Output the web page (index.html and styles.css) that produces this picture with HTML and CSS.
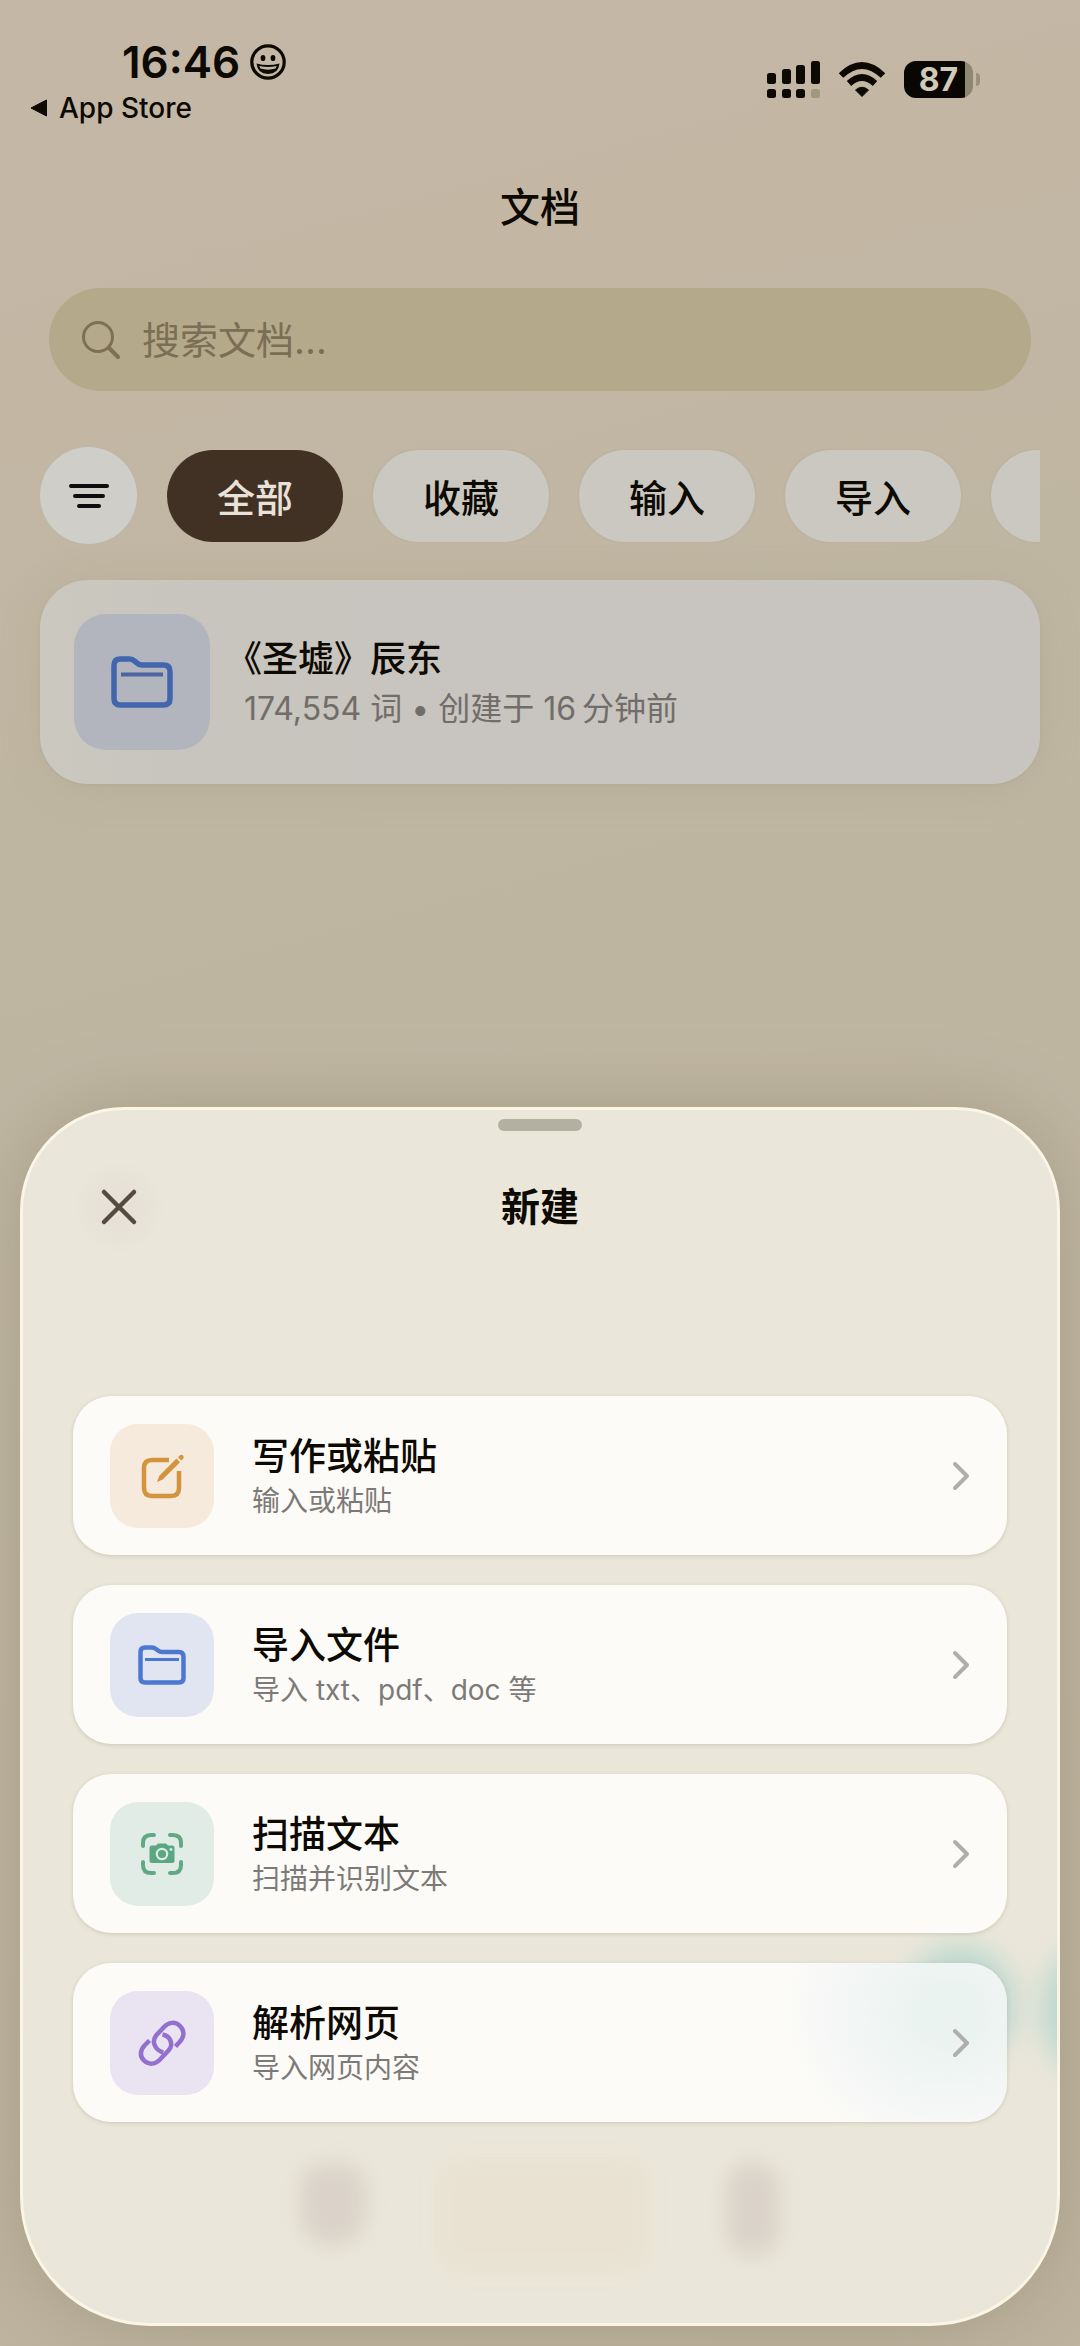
FILE: index.html
```html
<!DOCTYPE html>
<html lang="zh-CN">
<head>
<meta charset="utf-8">
<meta name="viewport" content="width=device-width, initial-scale=1">
<title>文档</title>
<link rel="stylesheet" href="styles.css">
</head>
<body>
<div class="screen">
  <header class="status">
    <div class="status-left">
      <div class="clock">
        <span>16:46</span>
        <svg width="36" height="36" viewBox="0 0 36 36" aria-hidden="true">
          <circle cx="18" cy="18" r="16.2" fill="none" stroke="#0d0903" stroke-width="3.200"/>
          <ellipse cx="13" cy="14" rx="2.4" ry="3.1" fill="#0d0903"/>
          <ellipse cx="23" cy="14" rx="2.4" ry="3.1" fill="#0d0903"/>
          <path d="M6.500 19.500Q18 22.500 29.500 19.500Q28.500 30 18 30Q7.500 30 6.500 19.500Z" fill="#0d0903"/>
          <path d="M9.300 21.900Q18 24 26.700 21.900L25.600 24.600Q18 26.800 10.400 24.600Z" fill="#c4b7a6"/>
        </svg>
      </div>
      <a class="back" href="#">
        <svg width="18" height="18" viewBox="0 0 18 18" aria-hidden="true"><path d="M1 9L16.500 1V17Z" fill="#0d0903" stroke="#0d0903" stroke-width="1" stroke-linejoin="round"/></svg>
        <span>App Store</span>
      </a>
    </div>
    <div class="status-right">
      <svg width="54" height="37" viewBox="0 0 54 37" fill="#0d0903" aria-label="信号">
        <rect x="0" y="12" width="9" height="11" rx="2.500"/>
        <rect x="15" y="8" width="9" height="15" rx="2.500"/>
        <rect x="29" y="4" width="9" height="19" rx="2.500"/>
        <rect x="44" y="0" width="9" height="23" rx="2.500"/>
        <rect x="0" y="28" width="9" height="9" rx="2.500"/>
        <rect x="15" y="28" width="9" height="9" rx="2.500"/>
        <rect x="29" y="28" width="9" height="9" rx="2.500"/>
        <rect x="44" y="28" width="9" height="9" rx="2.500" fill="#a2977f"/>
      </svg>
      <svg class="wifi" width="48" height="36" viewBox="0 0 48 36" fill="none" stroke="#0d0903" aria-label="无线网络">
        <path d="M3 13.500Q24 -6.500 45 13.500" stroke-width="6.500"/>
        <path d="M11 21.500Q24 9.500 37 21.500" stroke-width="6.500"/>
        <path d="M24 34.500L17.500 28Q24 22.500 30.500 28Z" fill="#0d0903" stroke-width="1"/>
      </svg>
      <div class="battery"><span>87</span></div>
      <i class="nub"></i>
    </div>
  </header>

  <main class="library">
    <h1 class="page-title">文档</h1>

    <label class="search">
      <svg width="40" height="40" viewBox="0 0 40 40" fill="none" stroke="#7d7055" stroke-linecap="round" aria-hidden="true">
        <circle cx="17" cy="17" r="14.500" stroke-width="3"/>
        <path d="M28 28L37 37" stroke-width="4"/>
      </svg>
      <input type="search" placeholder="搜索文档..." aria-label="搜索文档">
    </label>

    <nav class="filters">
      <button class="sort" aria-label="排序">
        <svg width="40" height="26" viewBox="0 0 40 26" fill="none" stroke="#0d0d0d" stroke-width="4" stroke-linecap="round"><path d="M2 3H38M6 13H34M10 23H30"/></svg>
      </button>
      <button class="chip chip-on">全部</button>
      <button class="chip">收藏</button>
      <button class="chip">输入</button>
      <button class="chip">导入</button>
      <button class="chip" aria-label="更多"></button>
    </nav>

    <article class="doc">
      <div class="doc-tile">
        <svg width="62" height="52" viewBox="0 0 62 52" fill="none" stroke="#4266ad" aria-hidden="true">
          <path d="M3 9.500Q3 3 9.500 3H18.500Q21.500 3 23.500 5L26 7Q28 9 31 9H52.500Q59 9 59 15.500V42.500Q59 49 52.500 49H9.500Q3 49 3 42.500Z" stroke-width="5.500"/>
          <path d="M10 18.500H52" stroke="#4d65a0" stroke-width="4"/>
        </svg>
      </div>
      <div class="doc-text">
        <h2>《圣墟》辰东</h2>
        <p>174,554 词 • 创建于 16&#8201;分钟前</p>
      </div>
    </article>
  </main>
</div>

<section class="sheet" role="dialog" aria-labelledby="sheet-title">
  <div class="glow"><i class="teal teal-a"></i><i class="teal teal-b"></i><i class="ghost ghost-a"></i><i class="ghost ghost-b"></i><i class="ghost ghost-c"></i></div>
  <i class="handle"></i>
  <header class="sheet-head">
    <button class="close" aria-label="关闭">
      <svg width="38" height="38" viewBox="0 0 38 38" fill="none" stroke="#554b41" stroke-width="4.500" stroke-linecap="round"><path d="M4 4L34 34M34 4L4 34"/></svg>
    </button>
    <h2 id="sheet-title">新建</h2>
  </header>

  <div class="options">
    <button class="option">
      <span class="tile orange">
        <svg width="48" height="48" viewBox="0 0 48 48" fill="none" stroke="#d4933f" stroke-width="4.500" aria-hidden="true">
          <path d="M31 8H14Q6 8 6 16V36Q6 44 14 44H33Q41 44 41 36V19"/>
          <path d="M19 30L21.300 23.800L38.500 6.600L42 10.200L24.700 27.400Z" fill="#d4933f" stroke="none"/>
          <path d="M40 5.200L42 3.200Q43.500 2.200 45 3.500Q46.300 5 45.200 6.600L43.300 8.600Z" fill="#d4933f" stroke="none"/>
        </svg>
      </span>
      <span class="option-text"><strong>写作或粘贴</strong><small>输入或粘贴</small></span>
      <svg class="chevron" width="18" height="30" viewBox="0 0 18 30" aria-hidden="true"><path d="M3 3L15 15L3 27"/></svg>
    </button>
    <button class="option">
      <span class="tile blue">
        <svg width="48" height="40" viewBox="0 0 48 40" fill="none" stroke="#4c78cf" aria-hidden="true">
          <path d="M2.500 7Q2.500 2.500 7 2.500H14Q16 2.500 18 4L20 5.500Q22 7 24 7H41Q45.500 7 45.500 12V33Q45.500 37.500 41 37.500H7Q2.500 37.500 2.500 33Z" stroke-width="4.500"/>
          <path d="M7 14.500H41" stroke-width="3"/>
        </svg>
      </span>
      <span class="option-text"><strong>导入文件</strong><small>导入 txt、pdf、doc 等</small></span>
      <svg class="chevron" width="18" height="30" viewBox="0 0 18 30" aria-hidden="true"><path d="M3 3L15 15L3 27"/></svg>
    </button>
    <button class="option">
      <span class="tile green">
        <svg width="42" height="42" viewBox="0 0 42 42" fill="none" stroke="#61a985" aria-hidden="true">
          <path d="M2 13V10Q2 2 10 2H13M29 2H32Q40 2 40 10V13M40 29V32Q40 40 32 40H29M13 40H10Q2 40 2 32V29" stroke-width="4" stroke-linecap="round"/>
          <path d="M11 12.500H15L17 10.500H25L27 12.500H31Q33.500 12.500 33.500 15V27.500Q33.500 30 31 30H11Q8.500 30 8.500 27.500V15Q8.500 12.500 11 12.500Z" fill="#5ba781" stroke="none"/>
          <circle cx="21" cy="21" r="5.200" stroke="#dcebe4" stroke-width="2.200"/>
          <circle cx="30" cy="16.500" r="1.400" fill="#dcebe4" stroke="none"/>
        </svg>
      </span>
      <span class="option-text"><strong>扫描文本</strong><small>扫描并识别文本</small></span>
      <svg class="chevron" width="18" height="30" viewBox="0 0 18 30" aria-hidden="true"><path d="M3 3L15 15L3 27"/></svg>
    </button>
    <button class="option">
      <span class="tile purple">
        <svg width="48" height="48" viewBox="0 0 48 48" fill="none" stroke="#936fce" stroke-width="4.500" aria-hidden="true">
          <path d="M25.300 33.500C17 31 13 22.500 18.500 16L26.500 7.500C31 3 37.500 2.500 42 7C46.500 11.500 46.500 17.500 42 22.500L37.500 27.500"/>
          <path d="M11.500 21.500L7 26C2 31 1.500 37.500 6 41.500C10.500 46 17 45.500 21.500 41L30.500 31.500C36 25.500 32.500 17 24.500 15.500"/>
        </svg>
      </span>
      <span class="option-text"><strong>解析网页</strong><small>导入网页内容</small></span>
      <svg class="chevron" width="18" height="30" viewBox="0 0 18 30" aria-hidden="true"><path d="M3 3L15 15L3 27"/></svg>
    </button>
  </div>
</section>
</body>
</html>
```
FILE: styles.css
```css
* {
  box-sizing: border-box;
}

body {
  position: relative;
  margin: 0;
  min-height: 100vh;
  overflow-x: hidden;
  background: linear-gradient(165deg, #c4b7a6 0%, #c3b7a4 15%, #bfb6a2 32%, #bdb39e 100%);
  color: #0d0903;
  font-family: Inter, "Noto Sans CJK SC", sans-serif;
}

h1,
h2,
p {
  margin: 0;
}

button {
  margin: 0;
  padding: 0;
  border: 0;
  color: inherit;
  font: inherit;
}

svg {
  display: block;
  flex: none;
}

/* Status bar */
.status {
  display: flex;
  justify-content: space-between;
  padding: 36px 100px 0 30px;
  height: 168px;
}

.clock {
  display: flex;
  align-items: center;
  gap: 10px;
  padding-left: 92px;
  font-size: 44px;
  font-weight: 600;
  line-height: 52px;
}

.back {
  display: flex;
  align-items: center;
  gap: 11px;
  color: inherit;
  font-size: 28px;
  font-weight: 500;
  line-height: 40px;
  text-decoration: none;
}

.status-right {
  display: flex;
  align-items: center;
  align-self: flex-start;
  padding-top: 25px;
}

.wifi {
  margin: 0 18px 0 17px;
}

.battery {
  width: 69px;
  height: 37px;
  border-radius: 12px;
  background: linear-gradient(90deg, #0a0602 61px, #8e8873 61px);
  color: #d2cab9;
  font-size: 32px;
  font-weight: 700;
  line-height: 37px;
  text-align: center;
}

.nub {
  width: 4px;
  height: 13px;
  margin-left: 3px;
  border-radius: 0 6px 6px 0;
  background: #9c917d;
}

/* Library */
.library {
  display: flex;
  flex-direction: column;
  padding: 0 40px;
}

.page-title {
  height: 120px;
  font-size: 40px;
  font-weight: 500;
  line-height: 80px;
  text-align: center;
}

.search {
  display: flex;
  align-items: center;
  gap: 21px;
  height: 103px;
  margin: 0 9px;
  padding: 0 32px;
  border-radius: 52px;
  background: #b4a98b;
}

.search input {
  flex: 1;
  min-width: 0;
  padding: 0;
  border: 0;
  outline: 0;
  background: none;
  color: #0d0903;
  font: 400 38px/50px Inter, "Noto Sans CJK SC", sans-serif;
}

.search input::placeholder {
  color: #7a6e54;
  opacity: 1;
}

.filters {
  display: flex;
  align-items: center;
  gap: 30px;
  margin-top: 48px;
  padding: 8px 0;
  overflow: hidden;
}

.sort {
  display: grid;
  flex: none;
  place-items: center;
  width: 97px;
  height: 97px;
  border-radius: 50%;
  background: #cfcec9;
  box-shadow: 0 0 2px 1px #bdb8a5;
}

.chip {
  flex: none;
  width: 176px;
  height: 92px;
  border-radius: 46px;
  background: #cac8c1;
  box-shadow: 0 0 2px 1px #b9b29e;
  font-size: 38px;
  font-weight: 500;
}

.chip-on {
  background: #413125;
  box-shadow: none;
  color: #e9e2d8;
}

.doc {
  display: flex;
  align-items: center;
  gap: 34px;
  height: 204px;
  margin-top: 28px;
  padding: 0 34px;
  border-radius: 48px;
  background: linear-gradient(90deg, #cac8bf 0, #c8c4be 180px, #c8c4c0 100%);
  box-shadow: 0 1px 3px #b3ab99, 0 4px 40px rgba(150, 140, 110, 0.2);
}

.doc-tile {
  display: grid;
  flex: none;
  place-items: center;
  width: 136px;
  height: 136px;
  border-radius: 32px;
  background: #b2b5bd;
}

.doc-text {
  padding-top: 4px;
}

.doc-text h2 {
  font-size: 36px;
  font-weight: 500;
  line-height: 50px;
  text-spacing-trim: trim-start;
}

.doc-text p {
  color: #716d68;
  font-size: 32px;
  line-height: 50px;
}

/* Bottom sheet */
.sheet {
  position: absolute;
  right: 20px;
  bottom: 20px;
  left: 20px;
  display: flex;
  flex-direction: column;
  padding: 9px 50px 201px;
  border: 3px solid #faf5e4;
  border-radius: 104px 104px 130px 130px;
  background: #eae7da;
  box-shadow: 0 0 70px rgba(125, 115, 90, 0.35);
}

.handle {
  align-self: center;
  width: 84px;
  height: 12px;
  border-radius: 6px;
  background: #b2b1a1;
}

.sheet-head {
  display: grid;
  grid-template-columns: 92px 1fr 92px;
  align-items: center;
  margin-top: 28px;
}

.close {
  display: grid;
  place-items: center;
  width: 92px;
  height: 96px;
  border-radius: 50%;
  background: radial-gradient(circle, #e6e2d7 30%, #e8e4d8 55%, #eae7da 70%);
}

.sheet-head h2 {
  font-size: 39px;
  font-weight: 600;
  line-height: 60px;
  text-align: center;
}

.options {
  position: relative;
  display: grid;
  gap: 30px;
  margin-top: 141px;
}

.option {
  display: flex;
  align-items: center;
  gap: 38px;
  height: 159px;
  padding: 0 37px;
  border-radius: 38px;
  background: #fcfbf7;
  box-shadow: 0 1px 4px rgba(160, 155, 130, 0.4);
  text-align: left;
}

.option:last-child {
  background: radial-gradient(ellipse 170px 150px at 875px 50px, #ebf3f1 20%, #f7f8f7 75%, #fcfbf7 100%);
}

.tile {
  display: grid;
  flex: none;
  place-items: center;
  width: 104px;
  height: 104px;
  border-radius: 28px;
}

.orange {
  background: #f5eadb;
}

.blue {
  background: #e1e5f2;
}

.green {
  background: #e1ece6;
}

.purple {
  background: #eae3f1;
}

.option-text {
  display: flex;
  flex: 1;
  flex-direction: column;
}

.option-text strong {
  font-size: 37px;
  font-weight: 500;
  line-height: 50px;
}

.option-text small {
  color: #7c7a77;
  font-size: 28px;
  line-height: 38px;
}

.chevron {
  fill: none;
  stroke: #aeaeac;
  stroke-width: 4;
  stroke-linecap: round;
  stroke-linejoin: round;
}

/* Colours of the page showing through the frosted sheet */
.glow {
  position: absolute;
  inset: 0;
  overflow: hidden;
  border-radius: 101px 101px 127px 127px;
}

.teal,
.ghost {
  position: absolute;
  border-radius: 50%;
}

.teal {
  background: #b9d6cf;
  filter: blur(14px);
}

.teal-a {
  right: 42px;
  bottom: 260px;
  width: 110px;
  height: 116px;
}

.teal-b {
  right: -90px;
  bottom: 245px;
  width: 104px;
  height: 136px;
}

.ghost {
  background: #dbd3c9;
  filter: blur(10px);
}

.ghost-a {
  bottom: 76px;
  left: 276px;
  width: 68px;
  height: 84px;
  border-radius: 24px 24px 34px 34px;
}

.ghost-b {
  bottom: 50px;
  left: 412px;
  width: 216px;
  height: 116px;
  border-radius: 20px;
  background: #e9e2d2;
}

.ghost-c {
  bottom: 66px;
  left: 702px;
  width: 56px;
  height: 96px;
  border-radius: 28px;
}
```
